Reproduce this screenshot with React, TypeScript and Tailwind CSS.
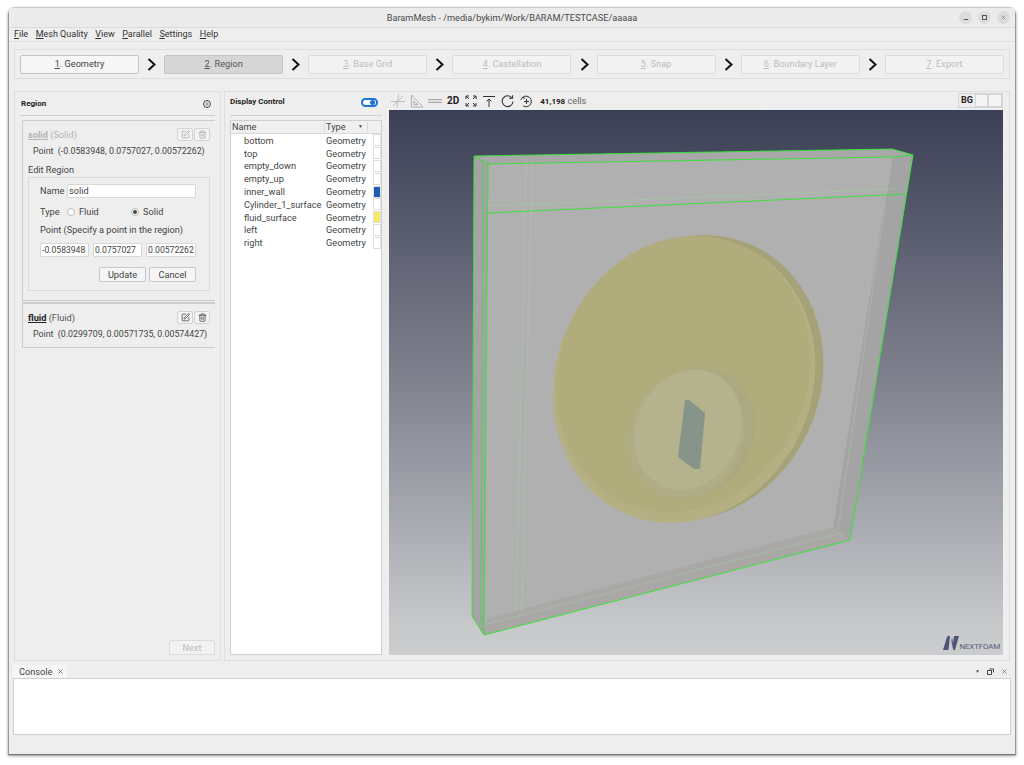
import { Plus, Trash2, SquarePen, X } from "lucide-react";

const steps = [
  { n: "1", label: ". Geometry", state: "done" },
  { n: "2", label: ". Region", state: "current" },
  { n: "3", label: ". Base Grid", state: "off" },
  { n: "4", label: ". Castellation", state: "off" },
  { n: "5", label: ". Snap", state: "off" },
  { n: "6", label: ". Boundary Layer", state: "off" },
  { n: "7", label: ". Export", state: "off" },
];

const rows: { name: string; color?: string }[] = [
  { name: "bottom" },
  { name: "top" },
  { name: "empty_down" },
  { name: "empty_up" },
  { name: "inner_wall", color: "bg-[#1e5fb4]" },
  { name: "Cylinder_1_surface" },
  { name: "fluid_surface", color: "bg-[#f6e96a]" },
  { name: "left" },
  { name: "right" },
];

const menus = [
  ["F", "ile"],
  ["M", "esh Quality"],
  ["V", "iew"],
  ["P", "arallel"],
  ["S", "ettings"],
  ["H", "elp"],
];

function Chevron() {
  return (
    <svg width="9" height="13" viewBox="0 0 9 13" className="shrink-0">
      <path d="M1.5 1 L7.5 6.5 L1.5 12" fill="none" stroke="#111" strokeWidth="2" />
    </svg>
  );
}

function IconButton({ off, children }: { off?: boolean; children: React.ReactNode }) {
  return (
    <div
      className={`flex h-[13px] w-[16px] items-center justify-center rounded-[2px] border border-[#d2d2d2] bg-[#f4f4f4] ${
        off ? "text-[#a8a8a8]" : "text-[#3a3a3a]"
      }`}
    >
      {children}
    </div>
  );
}

function CardHead({ name, type, off }: { name: string; type: string; off?: boolean }) {
  return (
    <div className="flex items-center justify-between">
      <div className={off ? "text-[#b4b4b4]" : "text-[#555]"}>
        <span className={`font-bold underline ${off ? "" : "text-[#222]"}`}>{name}</span> ({type})
      </div>
      <div className="flex gap-[1px]">
        <IconButton off={off}>
          <SquarePen size={9} />
        </IconButton>
        <IconButton off={off}>
          <Trash2 size={9} />
        </IconButton>
      </div>
    </div>
  );
}

function Field({ value, className }: { value: string; className: string }) {
  return (
    <div className={`flex h-[14px] items-center overflow-hidden whitespace-nowrap rounded-[1px] border border-[#d8d8d8] bg-white pl-[1px] text-[#444] ${className}`}>
      {value}
    </div>
  );
}

function PushButton({ label }: { label: string }) {
  return (
    <div className="flex h-[15px] w-[47px] items-center justify-center rounded-[2px] border border-[#c8c8c8] bg-[#f5f5f5] text-[#444]">
      {label}
    </div>
  );
}

function Radio({ on, label, className }: { on?: boolean; label: string; className: string }) {
  return (
    <div className={`flex items-center gap-[4px] ${className}`}>
      <span className="flex h-[8px] w-[8px] items-center justify-center rounded-full border border-[#bbb] bg-white">
        {on && <span className="h-[4px] w-[4px] rounded-full bg-[#444]" />}
      </span>
      {label}
    </div>
  );
}

function Toolbar() {
  return (
    <div className="flex h-[18px] items-center gap-[5px] pl-[2px]">
      <svg width="14" height="14" viewBox="0 0 14 14" fill="none" stroke="#bdbdbd" strokeWidth="1">
        <path d="M0 7.5 H14 M7.5 0 L6 14 M2 12 L12 2" />
      </svg>
      <svg width="14" height="14" viewBox="0 0 15 14" fill="none" stroke="#a9a9a9" strokeWidth="1">
        <path d="M1.5 0.5 V13.5 H14 Z M4 7 V11 H8.5 Z" />
      </svg>
      <div className="-ml-[1px] h-[4px] w-[14px] border-y border-[#aaa] bg-[#ddd]" />
      <span className="text-[10px] font-bold text-[#222]">2D</span>
      <svg width="12" height="12" viewBox="0 0 12 12" fill="none" stroke="#333" strokeWidth="1" className="ml-[1px]">
        <path d="M1 4 V1 H4 M1 1 L4 4 M8 1 H11 V4 M11 1 L8 4 M1 8 V11 H4 M1 11 L4 8 M8 11 H11 V8 M11 11 L8 8" />
      </svg>
      <svg width="12" height="12" viewBox="0 0 12 12" fill="none" stroke="#333" strokeWidth="1" className="ml-[1px]">
        <path d="M0 1.5 H12 M6 12 V4 M3.5 6.5 L6 4 L8.5 6.5" />
      </svg>
      <svg width="13" height="13" viewBox="0 0 13 13" fill="none" stroke="#333" strokeWidth="1.1" className="ml-[1px]">
        <path d="M11 3 A5.4 5.4 0 1 0 12 6.5" />
        <path d="M8 3.2 H11.6 V0.3" />
      </svg>
      <svg width="13" height="13" viewBox="0 0 13 13" fill="none" stroke="#333" strokeWidth="1" className="ml-[1px]">
        <path d="M2.5 2.5 A5.3 5.3 0 1 1 3 10.8" />
        <path d="M0.8 5 L2.5 2.3 L5 3.4 M6.5 4 V9 M4 6.5 H9" />
      </svg>
      <div className="ml-[2px] text-[#666]">
        <span className="text-[8px] font-bold text-[#222]">41,198</span> cells
      </div>
    </div>
  );
}

function MeshView() {
  return (
    <svg viewBox="389 110 614 545" className="block h-[545px] w-[614px]">
      <defs>
        <linearGradient id="sky" x1="0" y1="0" x2="0" y2="1">
          <stop offset="0" stopColor="#3b3f55" />
          <stop offset="0.5" stopColor="#80828f" />
          <stop offset="0.95" stopColor="#c8c9cb" />
          <stop offset="1" stopColor="#cbcccd" />
        </linearGradient>
      </defs>
      <rect x="389" y="110" width="614" height="545" fill="url(#sky)" />

      {/* solid shell */}
      <polygon points="474,156 892,149 913,155 850,540 484,635 472,616" fill="#b0b0b0" />
      <polygon points="474,156 488,164 484,635 472,616" fill="#a4a4a4" />
      <polygon points="474,156 892,149 913,155 893,157 488,164" fill="#a8a8a8" />
      <polygon points="892,157 913,155 850,540 833,527" fill="#a4a4a4" />
      <polygon points="484,635 850,540 833,527 522,609 487,619" fill="#a9a8a6" />

      {/* fluid disc */}
      <ellipse cx="692" cy="378" rx="128" ry="146" transform="rotate(25 692 378)" fill="#a5a278" />
      <ellipse cx="684" cy="380" rx="128" ry="146" transform="rotate(25 684 380)" fill="#b5b084" />
      <ellipse cx="683" cy="374" rx="124" ry="141" transform="rotate(25 683 374)" fill="#b0ac7c" />

      {/* hub */}
      <ellipse cx="696" cy="432" rx="57" ry="66" transform="rotate(25 696 432)" fill="#aca981" />
      <ellipse cx="686" cy="436" rx="57" ry="64" transform="rotate(25 686 436)" fill="#afac86" />
      <ellipse cx="688" cy="430" rx="52" ry="62" transform="rotate(25 688 430)" fill="#b5b28e" />
      <polygon points="685,400 689,400 705,413 700,469 694,469 678,457" fill="#87948a" />

      {/* wireframe */}
      <g fill="none" stroke="#2ee62e" strokeWidth="0.9">
        <path d="M474,156 L892,149 L913,155 L850,540 L484,635 L472,616 Z" />
        <path d="M488,164 L893,157 L913,155 M474,156 L488,164 L484,635" />
        <path d="M483,160 L481,625" strokeOpacity="0.7" />
        <path d="M488,213 L907,194" />
      </g>
      <g fill="none" stroke="#9fd89f" strokeWidth="0.6" strokeOpacity="0.7">
        <path d="M532,162 L522,612 M526,162 L516,612" />
        <path d="M488,206 L895,189" />
        <path d="M487,624 L845,532 M892,157 L838,530" />
      </g>
    </svg>
  );
}

export default function App() {
  return (
    <div className="h-[765px] w-[1024px] overflow-hidden bg-white pt-[7px] pl-[8px] font-['Roboto',sans-serif] text-[9.2px] leading-none text-[#444]">
      <div className="flex h-[748px] w-[1008px] flex-col rounded-t-[8px] border border-t-[#c8c8c8] border-x-[#9a9a9a] border-b-[#777] bg-[#eeeeee] shadow-[0_1px_3px_rgba(0,0,0,0.45)]">
        {/* title bar */}
        <div className="relative flex h-[20px] shrink-0 items-center justify-center border-b border-[#dadada] bg-[#ebebeb] text-[#4a4a4a]">
          BaramMesh - /media/bykim/Work/BARAM/TESTCASE/aaaaa
          <div className="absolute right-[5px] top-[3px] flex gap-[6px]">
            <span className="flex h-[13px] w-[13px] items-end justify-center rounded-full bg-[#dcdcdc] pb-[4px]">
              <span className="h-[1px] w-[4px] bg-[#555]" />
            </span>
            <span className="flex h-[13px] w-[13px] items-center justify-center rounded-full bg-[#dcdcdc]">
              <span className="h-[5px] w-[5px] border border-[#555]" />
            </span>
            <span className="flex h-[13px] w-[13px] items-center justify-center rounded-full bg-[#dcdcdc] text-[#444]">
              <X size={7} strokeWidth={1.5} />
            </span>
          </div>
        </div>

        {/* menu */}
        <div className="flex h-[14px] shrink-0 items-center gap-[7.5px] border-b border-[#e0e0e0] pl-[5px] text-[9px] text-[#333]">
          {menus.map(([u, rest]) => (
            <span key={u}>
              <u>{u}</u>
              {rest}
            </span>
          ))}
        </div>

        {/* steps */}
        <div className="mx-[5px] mt-[7px] flex h-[30px] shrink-0 items-center justify-between border border-[#dedede] px-[5px]">
          {steps.map((s, i) => (
            <div key={s.n} className="contents">
              <div
                className={`flex h-[19px] w-[119px] items-center justify-center rounded-[2px] border ${
                  s.state === "current"
                    ? "border-[#c4c4c4] bg-[#d6d6d6] text-[#555]"
                    : s.state === "done"
                    ? "border-[#c4c4c4] bg-[#f6f6f6] text-[#444]"
                    : "border-[#dcdcdc] bg-[#f2f2f2] text-[#bcbcbc]"
                }`}
              >
                <span>
                  <u>{s.n}</u>
                  {s.label}
                </span>
              </div>
              {i < steps.length - 1 && <Chevron />}
            </div>
          ))}
        </div>

        {/* main panels */}
        <div className="mx-[5px] mt-[12px] flex h-[570px] shrink-0 gap-[3px]">
          {/* region */}
          <div className="flex w-[207px] shrink-0 flex-col border border-[#dedede] px-[5px]">
            <div className="flex h-[24px] shrink-0 items-center justify-between border-b border-[#cfcfcf] pl-[1px] pr-[4px]">
              <span className="text-[8px] font-bold text-[#222]">Region</span>
              <span className="flex h-[8px] w-[8px] items-center justify-center rounded-full border border-[#444]">
                <Plus size={6} strokeWidth={2} />
              </span>
            </div>

            <div className="mt-[4px] ml-[2px] h-[181px] shrink-0 border border-r-0 border-[#cdcdcd] pl-[5px] pr-[5px] pt-[7px]">
              <CardHead name="solid" type="Solid" off />
              <div className="mt-[6px] ml-[5px] whitespace-nowrap text-[8.8px]">Point&nbsp; (-0.0583948, 0.0757027, 0.00572262)</div>
              <div className="mt-[9px]">Edit Region</div>
              <div className="mt-[3px] h-[114px] border border-[#dcdcdc] pl-[11px] pt-[6px]">
                <div className="flex items-center">
                  <span className="w-[27px]">Name</span>
                  <Field value="solid" className="w-[129px]" />
                </div>
                <div className="mt-[9px] flex items-center">
                  <span className="w-[27px]">Type</span>
                  <Radio label="Fluid" className="w-[64px]" />
                  <Radio on label="Solid" className="" />
                </div>
                <div className="mt-[9px]">Point (Specify a point in the region)</div>
                <div className="mt-[9px] flex gap-[4px] text-[8.6px]">
                  <Field value="-0.0583948" className="w-[49px]" />
                  <Field value="0.0757027" className="w-[49px]" />
                  <Field value="0.00572262" className="w-[50px]" />
                </div>
                <div className="mt-[10px] ml-[59px] flex gap-[3px]">
                  <PushButton label="Update" />
                  <PushButton label="Cancel" />
                </div>
              </div>
            </div>

            <div className="ml-[2px] mt-[1px] h-[46px] shrink-0 border border-r-0 border-t-2 border-[#cdcdcd] pl-[5px] pr-[5px] pt-[7px]">
              <CardHead name="fluid" type="Fluid" />
              <div className="mt-[6px] ml-[5px] whitespace-nowrap text-[8.8px]">Point&nbsp; (0.0299709, 0.00571735, 0.00574427)</div>
            </div>

            <div className="mt-auto mb-[5px] flex h-[15px] w-[46px] items-center justify-center self-end rounded-[2px] border border-[#dcdcdc] bg-[#f2f2f2] text-[#bcbcbc]">
              Next
            </div>
          </div>

          {/* display control + view */}
          <div className="flex min-w-0 flex-1 border border-[#dedede] pl-[5px]">
            <div className="flex w-[152px] shrink-0 flex-col pb-[5px]">
              <div className="flex h-[24px] shrink-0 items-center justify-between border-b border-[#cfcfcf] pr-[4px] pb-[3px]">
                <span className="text-[8px] font-bold text-[#222]">Display Control</span>
                <span className="flex h-[9px] w-[17px] items-center justify-end rounded-full border-2 border-[#1c74d8] bg-white pr-[1px]">
                  <span className="h-[5px] w-[5px] rounded-full bg-[#1c74d8]" />
                </span>
              </div>
              <div className="mt-[4px] flex min-h-0 flex-1 flex-col border border-[#d0d0d0] bg-white">
                <div className="flex h-[13px] shrink-0 items-center border-b border-[#d8d8d8] bg-[#f0f0f0]">
                  <span className="w-[94px] border-r border-[#dadada] pl-[1px]">Name</span>
                  <span className="flex w-[43px] items-center justify-between border-r border-[#dadada] pl-[1px] pr-[4px]">
                    Type
                    <span className="text-[5px]">▼</span>
                  </span>
                </div>
                {rows.map((r) => (
                  <div key={r.name} className="flex h-[12.8px] shrink-0 items-center">
                    <span className="w-[95px] whitespace-nowrap pl-[13px]">{r.name}</span>
                    <span className="w-[47px]">Geometry</span>
                    <span className={`h-[12px] flex-1 border border-[#dedede] ${r.color ?? "bg-white"}`} />
                  </div>
                ))}
              </div>
            </div>

            <div className="ml-[7px] w-[614px] shrink-0">
              <div className="relative">
                <Toolbar />
                <div className="absolute right-0 top-[1px] flex h-[15px] items-center border border-[#d4d4d4]">
                  <span className="w-[16px] text-center text-[9px] font-bold text-[#222]">BG</span>
                  <span className="h-[13px] w-[13px] border border-[#d4d4d4] bg-[#f4f4f4]" />
                  <span className="h-[13px] w-[14px] border border-[#d4d4d4] bg-[#f4f4f4]" />
                </div>
              </div>
              <div className="relative">
                <MeshView />
                <div className="absolute bottom-[4px] right-[3px] flex items-end gap-[1px]">
                  <svg width="16" height="16" viewBox="0 0 16 16">
                    <path d="M0 15 L4 2 Q5 0 7 1 L5.5 15 Z M7 15 L8.5 6 L10 14 Q10.5 16 12 15 L16 1 L11 1 L10 8 L9 2 Z" fill="#4d5677" />
                  </svg>
                  <span className="text-[8px] tracking-[-0.2px] text-[#596079]">NEXTFOAM</span>
                </div>
              </div>
            </div>
          </div>
        </div>

        {/* console dock */}
        <div className="mx-[4px] mt-[4px] shrink-0">
          <div className="flex h-[13px] items-center justify-between pr-[3px]">
            <div className="flex h-[13px] w-[54px] items-center gap-[5px] bg-[#f6f6f6] pl-[6px]">
              Console <X size={7} strokeWidth={2} />
            </div>
            <div className="flex items-center gap-[7px] text-[#555]">
              <span className="text-[5px]">▼</span>
              <svg width="7" height="7" viewBox="0 0 7 7" fill="none" stroke="#444" strokeWidth="1">
                <path d="M2.5 1 H6.5 V4.5 M0.5 2.5 H4.5 V6.5 H0.5 Z" />
              </svg>
              <X size={7} strokeWidth={2} />
            </div>
          </div>
          <div className="h-[57px] w-[998px] border border-[#d0d0d0] bg-white" />
        </div>
      </div>
    </div>
  );
}
